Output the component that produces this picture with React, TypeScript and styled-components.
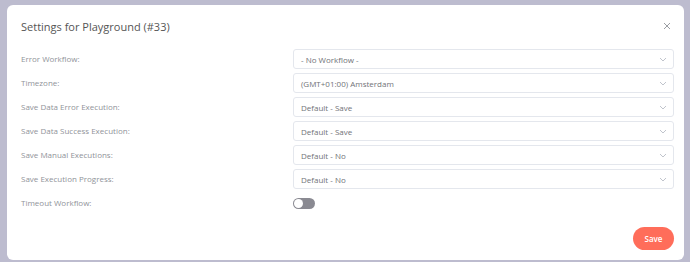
import React from "react";
import styled, { createGlobalStyle } from "styled-components";

const GlobalStyle = createGlobalStyle`
  html, body {
    margin: 0;
    padding: 0;
    background: #bdbccf;
  }
  body {
    font-family: "Open Sans", "Liberation Sans", sans-serif;
  }
`;

const Backdrop = styled.div`
  width: 690px;
  height: 262px;
  padding: 5px 6px 2px 7px;
  box-sizing: border-box;
  background: #bdbccf;
`;

const Dialog = styled.div`
  height: 100%;
  background: #ffffff;
  border-radius: 6px;
  box-sizing: border-box;
  padding: 12px 10px 10px 14px;
  display: flex;
  flex-direction: column;
`;

const DialogHeader = styled.div`
  display: flex;
  align-items: center;
  justify-content: space-between;
  height: 18px;
  margin-bottom: 14px;
`;

const Title = styled.h2`
  margin: 0;
  font-size: 11px;
  font-weight: 400;
  color: #555;
`;

const CloseButton = styled.button`
  border: 0;
  background: none;
  padding: 0;
  width: 14px;
  height: 14px;
  display: flex;
  align-items: center;
  justify-content: center;
  color: #909399;
`;

const Rows = styled.div`
  display: flex;
  flex-direction: column;
  gap: 4px;
`;

const Row = styled.div`
  display: grid;
  grid-template-columns: 272px 1fr;
  align-items: center;
  height: 20px;
`;

const Label = styled.div`
  font-size: 8px;
  color: #909399;
  padding-bottom: 2px;
`;

const SelectBox = styled.div`
  height: 20px;
  box-sizing: border-box;
  border: 1px solid #e4e7ed;
  border-radius: 3px;
  display: flex;
  align-items: center;
  justify-content: space-between;
  padding: 0 6px 0 7px;
  font-size: 8px;
  color: #717378;
`;

const Switch = styled.div<{ $on?: boolean }>`
  width: 22px;
  height: 11px;
  border-radius: 6px;
  background: ${(p) => (p.$on ? "#ff6d5a" : "#8a8a92")};
  position: relative;
  &::after {
    content: "";
    position: absolute;
    top: 1px;
    left: ${(p) => (p.$on ? "12px" : "1px")};
    width: 9px;
    height: 9px;
    border-radius: 50%;
    background: #fff;
  }
`;

const Footer = styled.div`
  margin-top: auto;
  display: flex;
  justify-content: flex-end;
`;

const SaveButton = styled.button`
  border: 0;
  background: #ff6d5a;
  color: #fff;
  font-family: inherit;
  font-weight: 600;
  font-size: 8px;
  height: 23px;
  width: 41px;
  border-radius: 12px;
  padding: 0;
`;

const Chevron = () => (
  <svg width="8" height="5" viewBox="0 0 8 5" fill="none">
    <path d="M1 1l3 3 3-3" stroke="#c0c4cc" strokeWidth="1" />
  </svg>
);

type SelectProps = { value: string };

const Select: React.FC<SelectProps> = ({ value }) => (
  <SelectBox>
    <span>{value}</span>
    <Chevron />
  </SelectBox>
);

const settings = [
  ["Error Workflow:", "- No Workflow -"],
  ["Timezone:", "(GMT+01:00) Amsterdam"],
  ["Save Data Error Execution:", "Default - Save"],
  ["Save Data Success Execution:", "Default - Save"],
  ["Save Manual Executions:", "Default - No"],
  ["Save Execution Progress:", "Default - No"],
];

const App: React.FC = () => {
  return (
    <>
      <GlobalStyle />
      <Backdrop>
        <Dialog>
          <DialogHeader>
            <Title>Settings for Playground (#33)</Title>
            <CloseButton>
              <svg width="8" height="8" viewBox="0 0 8 8">
                <path d="M1 1l6 6M7 1L1 7" stroke="#909399" strokeWidth="0.9" />
              </svg>
            </CloseButton>
          </DialogHeader>
          <Rows>
            {settings.map(([label, value]) => (
              <Row key={label}>
                <Label>{label}</Label>
                <Select value={value} />
              </Row>
            ))}
            <Row>
              <Label>Timeout Workflow:</Label>
              <Switch />
            </Row>
          </Rows>
          <Footer>
            <SaveButton>Save</SaveButton>
          </Footer>
        </Dialog>
      </Backdrop>
    </>
  );
};

export default App;
